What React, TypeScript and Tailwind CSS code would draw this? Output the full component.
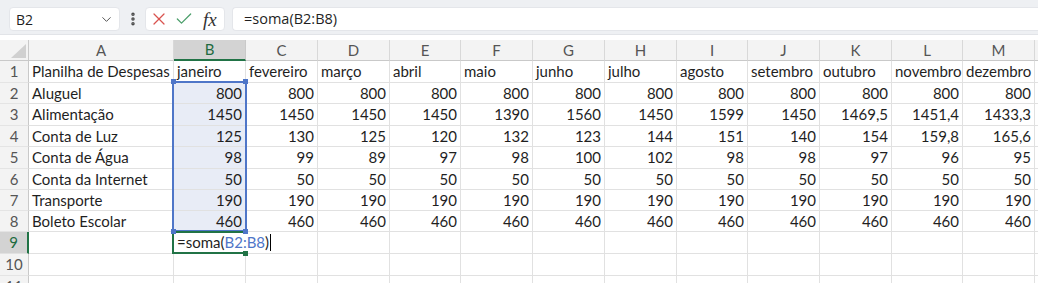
import { ChevronDown, EllipsisVertical, X, Check } from 'lucide-react';

const letters = ['A', 'B', 'C', 'D', 'E', 'F', 'G', 'H', 'I', 'J', 'K', 'L', 'M'];
const months = ['janeiro', 'fevereiro', 'março', 'abril', 'maio', 'junho', 'julho', 'agosto', 'setembro', 'outubro', 'novembro', 'dezembro'];
const rep = (v: string) => Array(12).fill(v) as string[];
const data: string[][] = [
  ['Planilha de Despesas', ...months],
  ['Aluguel', ...rep('800')],
  ['Alimentação', '1450', '1450', '1450', '1450', '1390', '1560', '1450', '1599', '1450', '1469,5', '1451,4', '1433,3'],
  ['Conta de Luz', '125', '130', '125', '120', '132', '123', '144', '151', '140', '154', '159,8', '165,6'],
  ['Conta de Água', '98', '99', '89', '97', '98', '100', '102', '98', '98', '97', '96', '95'],
  ['Conta da Internet', ...rep('50')],
  ['Transporte', ...rep('190')],
  ['Boleto Escolar', ...rep('460')],
  [],
  [],
  [],
];

const cellBase = 'border-r border-b border-[#e1e1e1] flex items-center whitespace-nowrap text-[15px] text-[#1f1f1f] [font-family:Lato,sans-serif]';

export default function App() {
  return (
    <div className="w-[1038px] h-[283px] overflow-hidden bg-white">
      {/* Formula bar */}
      <div className="h-[34px] bg-[#eef0f3] flex items-start pt-[7px] [font-family:'Open_Sans',sans-serif] text-[14px] text-[#1f1f1f]">
        <div className="ml-[9px] w-[111px] h-[24px] bg-white rounded-[4px] border border-[#e4e6ea] flex items-center justify-between pl-[6px] pr-[5px]">
          <span>B2</span>
          <ChevronDown size={15} strokeWidth={1.6} className="text-[#555]" />
        </div>
        <div className="w-[25px] h-[24px] flex items-center justify-center">
          <EllipsisVertical size={16} strokeWidth={3.2} className="text-[#4a4a4a]" />
        </div>
        <div className="w-[80px] h-[24px] bg-white rounded-[4px] border border-[#e4e6ea] flex items-center pl-[3px]">
          <X size={20} strokeWidth={1.5} className="text-[#d9534f]" />
          <Check size={20} strokeWidth={1.5} className="ml-[5px] text-[#4a9e6a]" />
          <span className="ml-[9px] [font-family:'Liberation_Serif',serif] italic text-[19px] text-[#333] leading-none">fx</span>
        </div>
        <div className="ml-[7px] flex-1 h-[24px] bg-white rounded-l-[4px] border border-r-0 border-[#e4e6ea] flex items-center pl-[11px] text-[14.5px]">
          =soma(B2:B8)
        </div>
      </div>
      <div className="h-[6px] bg-white border-t border-[#e2e4e8]" />

      {/* Sheet */}
      <div className="relative grid grid-cols-[29px_145px_72px_72px_72px_71px_72px_72px_72px_71px_72px_72px_71px_72px_1fr] grid-rows-[21px_22px_21px_22px_21px_22px_21px_21px_21px_22px_22px_22px]">
        {/* header row */}
        <div className="bg-[#f3f3f3] border-r border-b border-[#c9c9c9] relative">
          <svg className="absolute right-[2px] bottom-[2px]" width="15" height="14" viewBox="0 0 15 14">
            <polygon points="15,0 15,14 0,14" fill="#d0d0d0" />
          </svg>
        </div>
        {letters.map((l) => (
          <div
            key={l}
            className={
              l === 'B'
                ? 'bg-[#d3d3d3] border-r border-[#c9c9c9] border-b-2 border-b-[#217346] flex items-center justify-center text-[15px] text-[#1e6b40] [font-family:Lato,sans-serif]'
                : 'bg-[#f3f3f3] border-r border-b border-r-[#d8d8d8] border-b-[#c9c9c9] flex items-center justify-center text-[15px] text-[#555] [font-family:Lato,sans-serif]'
            }
          >
            {l}
          </div>
        ))}
        <div className="bg-[#f3f3f3] border-b border-[#c9c9c9]" />

        {data.map((row, ri) => {
          const rn = ri + 1;
          return [
            <div
              key={`h${rn}`}
              className={
                rn === 9
                  ? 'bg-[#d3d3d3] border-r-2 border-r-[#217346] border-b border-b-[#e1e1e1] flex items-center justify-center text-[15px] text-[#1e6b40] [font-family:Lato,sans-serif]'
                  : 'bg-[#f3f3f3] border-r border-b border-r-[#c9c9c9] border-b-[#e4e4e4] flex items-center justify-center text-[15px] text-[#555] [font-family:Lato,sans-serif]'
              }
            >
              {rn}
            </div>,
            ...letters.map((l, ci) => {
              const v = row[ci] ?? '';
              const inRange = ci === 1 && rn >= 2 && rn <= 8;
              const numeric = rn >= 2 && rn <= 8 && ci >= 1;
              const editing = rn === 9 && ci === 1;
              let content: React.ReactNode = v;
              if (editing) {
                content = (
                  <span className="relative z-10 flex items-center">
                    =soma(<span className="text-[#4f76c8]">B2:B8</span>)
                    <span className="inline-block w-[1px] h-[17px] bg-black ml-[1px]" />
                  </span>
                );
              }
              return (
                <div
                  key={`c${rn}${l}`}
                  className={`${cellBase} ${numeric ? 'justify-end pr-[3px]' : 'pl-[3px]'} ${inRange ? 'bg-[#e8ecf6]' : ''} ${editing ? 'border-r-transparent' : ''}`}
                >
                  {content}
                </div>
              );
            }),
            <div key={`f${rn}`} className="border-b border-[#e1e1e1]" />,
          ];
        })}

        {/* selection range B2:B8 */}
        <div className="absolute left-[172px] top-[41px] w-[75px] h-[151px] border-2 border-[#4f76c8] pointer-events-none" />
        {/* active cell B9 (editing: right edge hidden under text) */}
        <div className="absolute left-[172px] top-[191px] w-[75px] h-[23px] border-2 border-r-0 border-[#217346] pointer-events-none" />
        {/* handles */}
        <div className="absolute left-[171px] top-[39px] w-[5px] h-[5px] bg-[#4f76c8]" />
        <div className="absolute left-[243px] top-[39px] w-[5px] h-[5px] bg-[#4f76c8]" />
        <div className="absolute left-[171px] top-[189px] w-[5px] h-[5px] bg-[#4f76c8]" />
        <div className="absolute left-[243px] top-[189px] w-[5px] h-[5px] bg-[#4f76c8]" />
        <div className="absolute left-[243px] top-[211px] w-[5px] h-[5px] bg-[#217346]" />
      </div>
    </div>
  );
}
